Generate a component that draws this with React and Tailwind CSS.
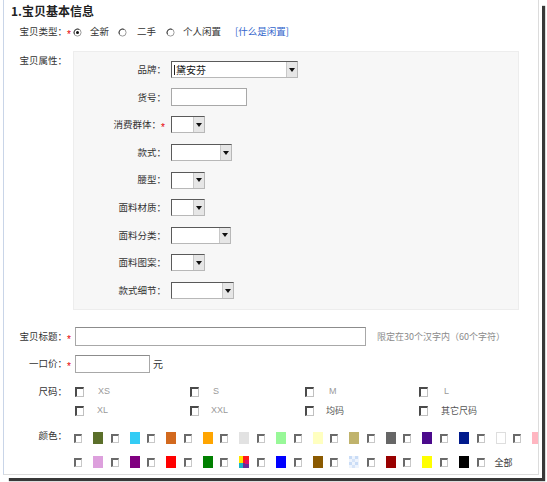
import React from "react";

const Star = () => (
  <span className="inline-block translate-y-[3px] text-[#e60000] text-[10px] leading-none font-['Liberation_Sans',sans-serif]">*</span>
);

const Arrow = () => (
  <div className="w-[11px] h-full bg-[#e6e6e6] border-l border-[#c8c8c8] flex items-center justify-center">
    <svg width="6" height="4" viewBox="0 0 6 4">
      <polygon points="0,0 6,0 3,4" fill="#111" />
    </svg>
  </div>
);

const Select = ({ className, text }) => (
  <div
    className={
      "flex h-[17px] bg-white border border-t-[#5a5a5a] border-l-[#5a5a5a] border-r-[#b8b8b8] border-b-[#b8b8b8] " +
      className
    }
  >
    <div className="flex-1 flex items-center pl-[2px] text-[10px] text-[#111] leading-none overflow-hidden">
      {text ? <span className="border-l border-[#222] pl-[1px]">{text}</span> : null}
    </div>
    <Arrow />
  </div>
);

const Radio = ({ checked }) => (
  <svg width="9" height="9" viewBox="0 0 9 9" className="shrink-0">
    <circle cx="4.5" cy="4.5" r="3.6" fill="#fff" stroke="#9a9a9a" strokeWidth="1" />
    <path d="M1.4 6.2 A3.6 3.6 0 0 1 6.2 1.4" fill="none" stroke="#444" strokeWidth="1" />
    {checked ? <circle cx="4.5" cy="4.5" r="1.5" fill="#111" /> : null}
  </svg>
);

const Check = ({ light }) => (
  <div
    className={
      light
        ? "w-[8px] h-[9px] shrink-0 bg-white border-t-2 border-l-2 border-t-[#6a6a6a] border-l-[#6a6a6a] border-r border-b border-r-[#c8c8c8] border-b-[#c8c8c8]"
        : "w-[9px] h-[10px] shrink-0 bg-white border-t-2 border-l-2 border-t-[#4a4a4a] border-l-[#4a4a4a] border-r border-b border-r-[#c0c0c0] border-b-[#c0c0c0]"
    }
  />
);

const Multi = () => (
  <svg width="10" height="12" viewBox="0 0 10 12">
    <rect x="0" y="0" width="10" height="12" fill="#ff1a1a" />
    <rect x="0" y="0" width="4" height="7" fill="#ffe600" />
    <rect x="0" y="7" width="4" height="5" fill="#19b3c8" />
    <rect x="4" y="7" width="6" height="5" fill="#6a2c9a" />
    <rect x="6" y="4" width="4" height="4" fill="#e0106a" />
  </svg>
);

const Pattern = () => (
  <svg width="10" height="12" viewBox="0 0 10 12">
    <rect width="10" height="12" fill="#eef4fd" />
    <rect x="0" y="0" width="3" height="3" fill="#c9dcf6" />
    <rect x="6" y="0" width="3" height="3" fill="#c9dcf6" />
    <rect x="3" y="3" width="3" height="3" fill="#d6e4f8" />
    <rect x="0" y="6" width="3" height="3" fill="#c9dcf6" />
    <rect x="6" y="6" width="3" height="3" fill="#c9dcf6" />
    <rect x="3" y="9" width="3" height="3" fill="#d6e4f8" />
  </svg>
);

const row1 = [
  "bg-[#5b6f2a]",
  "bg-[#33ccf5]",
  "bg-[#d2691e]",
  "bg-[#ffa500]",
  "bg-[#e2e2e2]",
  "bg-[#98f898]",
  "bg-[#ffffc0]",
  "bg-[#c0b36c]",
  "bg-[#666666]",
  "bg-[#4b0a8c]",
  "bg-[#001a8c]",
  "bg-white border border-[#dedede]",
  "bg-[#ffb6c1]",
];

const row2 = [
  "bg-[#dda0dd]",
  "bg-[#800080]",
  "bg-[#ff0000]",
  "bg-[#008000]",
  "multi",
  "bg-[#0000ff]",
  "bg-[#8b5a00]",
  "pattern",
  "bg-[#990000]",
  "bg-[#ffff00]",
  "bg-[#000000]",
];

const Swatch = ({ c }) => {
  if (c === "multi") return <div className="ml-[11px] w-[10px] h-[12px] shrink-0 flex"><Multi /></div>;
  if (c === "pattern") return <div className="ml-[11px] w-[10px] h-[12px] shrink-0 flex"><Pattern /></div>;
  return <div className={"ml-[11px] w-[10px] h-[12px] shrink-0 " + c} />;
};

const PanelRow = ({ label, star, children }) => (
  <div className="h-[27.6px] flex items-center">
    <div className="w-[92px] shrink-0 text-right text-[9.5px] text-[#333] leading-none">
      {label}
      {star ? <span className="inline-block w-[5px] text-left"><Star /></span> : null}
    </div>
    <div className="ml-[5px] flex items-center">{children}</div>
  </div>
);

const Label = ({ children, className }) => (
  <div className={"w-[63px] shrink-0 text-right text-[9.5px] text-[#333] " + (className || "")}>{children}</div>
);

export default function App() {
  return (
    <div className="w-[547px] h-[482px] bg-white overflow-hidden font-['Noto_Sans_CJK_SC','Noto_Sans',sans-serif]">
      <div className="ml-[3px] w-[536px] h-[475px] bg-white border-l border-r border-b border-l-[#c9d5e8] border-r-[#dcdcdc] border-b-[#dcdcdc] shadow-[3px_3px_0_#fff,6px_6px_1px_#383838] overflow-hidden flex flex-col">
        {/* title */}
        <div className="mt-[4px] h-[14px] pl-[7px] text-[12px] font-bold text-[#222] leading-[14px]">
          1.宝贝基本信息
        </div>

        {/* 宝贝类型 */}
        <div className="mt-[7px] h-[16px] flex items-center text-[9.5px] text-[#333] leading-none">
          <Label>宝贝类型：</Label>
          <div className="w-[6px] shrink-0"><Star /></div>
          <Radio checked />
          <span className="ml-[8px]">全新</span>
          <span className="ml-[9px] flex"><Radio /></span>
          <span className="ml-[10px]">二手</span>
          <span className="ml-[10px] flex"><Radio /></span>
          <span className="ml-[8px]">个人闲置</span>
          <span className="ml-[14px] text-[#3366cc]">[什么是闲置]</span>
        </div>

        {/* 宝贝属性 */}
        <div className="mt-[12px] flex items-start">
          <Label className="mt-[2px] h-[16px] flex items-center justify-end leading-none">宝贝属性：</Label>
          <div className="w-[6px] shrink-0" />
          <div className="w-[446px] shrink-0 h-[259px] bg-[#f7f7f7] border border-[#ededed] pt-[4px] flex flex-col">
            <PanelRow label="品牌：">
              <Select className="w-[127px]" text="黛安芬" />
            </PanelRow>
            <PanelRow label="货号：">
              <div className="w-[76px] h-[18px] bg-white border border-[#a8a8a8]" />
            </PanelRow>
            <PanelRow label="消费群体：" star>
              <Select className="w-[34px]" />
            </PanelRow>
            <PanelRow label="款式：">
              <Select className="w-[61px]" />
            </PanelRow>
            <PanelRow label="腰型：">
              <Select className="w-[34px]" />
            </PanelRow>
            <PanelRow label="面料材质：">
              <Select className="w-[34px]" />
            </PanelRow>
            <PanelRow label="面料分类：">
              <Select className="w-[60px]" />
            </PanelRow>
            <PanelRow label="面料图案：">
              <Select className="w-[34px]" />
            </PanelRow>
            <PanelRow label="款式细节：">
              <Select className="w-[63px]" />
            </PanelRow>
          </div>
        </div>

        {/* 宝贝标题 */}
        <div className="mt-[17px] h-[19px] flex items-center text-[9.5px] text-[#333] leading-none">
          <Label>宝贝标题：</Label>
          <div className="w-[8px] shrink-0"><Star /></div>
          <div className="w-[291px] shrink-0 h-[19px] bg-white border border-[#a8a8a8] border-t-[#8c8c8c]" />
          <span className="ml-[11px] text-[#8a8a8a] text-[9px]">限定在30个汉字内（60个字符）</span>
        </div>

        {/* 一口价 */}
        <div className="mt-[9px] h-[18px] flex items-center text-[9.5px] text-[#333] leading-none">
          <Label>一口价：</Label>
          <div className="w-[8px] shrink-0"><Star /></div>
          <div className="w-[75px] shrink-0 h-[18px] bg-white border border-[#a8a8a8] border-t-[#8c8c8c]" />
          <span className="ml-[3px] text-[10px]">元</span>
        </div>

        {/* 尺码 */}
        <div className="mt-[9px] flex items-start text-[9px] leading-none">
          <Label className="h-[19px] flex items-center justify-end">尺码：</Label>
          <div className="w-[8px] shrink-0" />
          <div className="flex flex-col shrink-0">
            <div className="h-[19px] grid grid-cols-[115px_115px_114px_115px] items-center">
              <div className="flex items-center"><Check /><span className="ml-[14px] text-[#9a9a9a] font-['Liberation_Sans',sans-serif]">XS</span></div>
              <div className="flex items-center"><Check /><span className="ml-[14px] text-[#9a9a9a] font-['Liberation_Sans',sans-serif]">S</span></div>
              <div className="flex items-center"><Check /><span className="ml-[15px] text-[#9a9a9a] font-['Liberation_Sans',sans-serif]">M</span></div>
              <div className="flex items-center"><Check /><span className="ml-[16px] text-[#9a9a9a] font-['Liberation_Sans',sans-serif]">L</span></div>
            </div>
            <div className="h-[19px] grid grid-cols-[115px_115px_114px_115px] items-center">
              <div className="flex items-center"><Check /><span className="ml-[13px] text-[#9a9a9a] font-['Liberation_Sans',sans-serif]">XL</span></div>
              <div className="flex items-center"><Check /><span className="ml-[12px] text-[#9a9a9a] font-['Liberation_Sans',sans-serif]">XXL</span></div>
              <div className="flex items-center"><Check /><span className="ml-[12px] text-[#555]">均码</span></div>
              <div className="flex items-center"><Check /><span className="ml-[13px] text-[#555]">其它尺码</span></div>
            </div>
          </div>
        </div>

        {/* 颜色 */}
        <div className="mt-[6px] flex items-start text-[9px] leading-none">
          <Label className="h-[20px] flex items-center justify-end">颜色：</Label>
          <div className="w-[7px] shrink-0" />
          <div className="flex flex-col shrink-0">
            <div className="h-[24px] flex items-center">
              {row1.map((c, i) => (
                <div key={i} className="w-[36.6px] shrink-0 flex items-center">
                  <Check light />
                  <Swatch c={c} />
                </div>
              ))}
            </div>
            <div className="h-[24px] flex items-center">
              {row2.map((c, i) => (
                <div key={i} className="w-[36.6px] shrink-0 flex items-center">
                  <Check light />
                  <Swatch c={c} />
                </div>
              ))}
              <div className="flex items-center shrink-0">
                <Check light />
                <span className="ml-[10px] text-[#333]">全部</span>
              </div>
            </div>
          </div>
        </div>
      </div>
    </div>
  );
}
